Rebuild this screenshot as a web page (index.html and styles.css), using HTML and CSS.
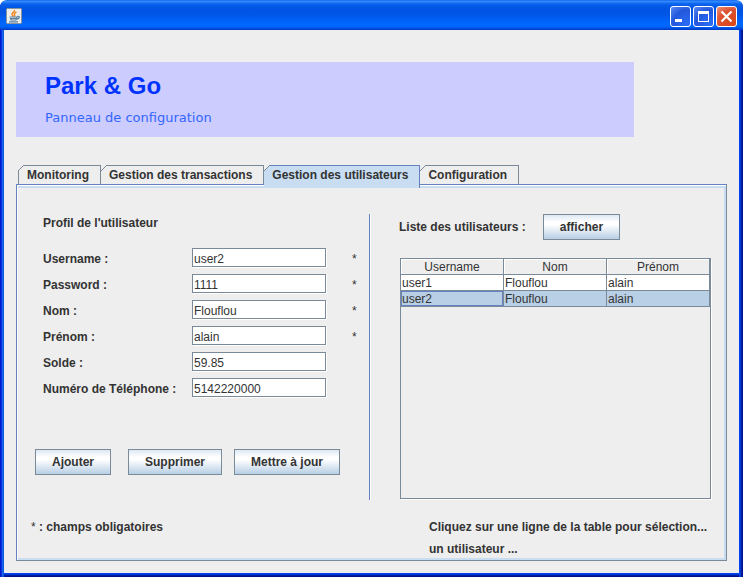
FILE: index.html
```html
<!DOCTYPE html>
<html lang="fr">
<head>
<meta charset="utf-8">
<title>Park &amp; Go</title>
<link rel="stylesheet" href="styles.css">
</head>
<body>
<div class="window">
  <header class="titlebar">
    <svg class="app-icon" viewBox="0 0 16 16" aria-hidden="true">
      <rect x="0.5" y="0.5" width="15" height="15" rx="1" fill="#eceeee" stroke="#8a949c"/>
      <path d="M8.500 2C9 4 6 4.500 6 6.200C6 7.300 7 7.500 7.300 8.500M10.500 4C8.800 4.800 8 5.500 8.500 6.500C9 7.200 8.800 7.800 8.300 8.500" fill="none" stroke="#f08a24" stroke-width="1.500"/>
      <path d="M3.500 9H11L10 12H5L4.500 10.500H11M11.500 8.500C14 8 14 10.500 11 11.200M3 13.800H12" fill="none" stroke="#5b7f9f" stroke-width="1.200"/>
    </svg>
    <div class="window-buttons">
      <button class="win-btn" type="button" aria-label="Réduire">
        <svg viewBox="0 0 19 19"><rect x="4" y="12" width="7" height="3" fill="#fff"/></svg>
      </button>
      <button class="win-btn" type="button" aria-label="Agrandir">
        <svg viewBox="0 0 19 19"><path fill="#fff" fill-rule="evenodd" d="M4 4H15V15H4ZM5 7V14H14V7Z"/></svg>
      </button>
      <button class="win-btn win-close" type="button" aria-label="Fermer">
        <svg viewBox="0 0 19 19"><path d="M4.500 4.500L14.500 14.500M14.500 4.500L4.500 14.500" stroke="#fff" stroke-width="2.200"/></svg>
      </button>
    </div>
  </header>

  <main class="content">
    <div class="banner">
      <h1>Park &amp; Go</h1>
      <p>Panneau de configuration</p>
    </div>

    <div class="tabs" role="tablist">
      <button class="tab" type="button" role="tab">Monitoring</button>
      <button class="tab" type="button" role="tab">Gestion des transactions</button>
      <button class="tab selected" type="button" role="tab" aria-selected="true">Gestion des utilisateurs</button>
      <button class="tab" type="button" role="tab">Configuration</button>
    </div>

    <section class="panel">
      <div class="columns">
        <form class="profile">
          <h2>Profil de l'utilisateur</h2>
          <div class="fields">
            <div class="field"><label for="username">Username :</label><input id="username" type="text" value="user2"><span class="star">*</span></div>
            <div class="field"><label for="password">Password :</label><input id="password" type="text" value="1111"><span class="star">*</span></div>
            <div class="field"><label for="nom">Nom :</label><input id="nom" type="text" value="Flouflou"><span class="star">*</span></div>
            <div class="field"><label for="prenom">Prénom :</label><input id="prenom" type="text" value="alain"><span class="star">*</span></div>
            <div class="field"><label for="solde">Solde :</label><input id="solde" type="text" value="59.85"></div>
            <div class="field"><label for="tel">Numéro de Téléphone :</label><input id="tel" type="text" value="5142220000"></div>
          </div>
          <div class="actions">
            <button class="btn" type="button">Ajouter</button>
            <div class="edit-actions">
              <button class="btn" type="button">Supprimer</button>
              <button class="btn" type="button">Mettre à jour</button>
            </div>
          </div>
        </form>

        <div class="users">
          <div class="users-head">
            <h2>Liste des utilisateurs :</h2>
            <button class="btn" type="button">afficher</button>
          </div>
          <div class="table-box">
            <table>
              <thead><tr><th>Username</th><th>Nom</th><th>Prénom</th></tr></thead>
              <tbody>
                <tr><td>user1</td><td>Flouflou</td><td>alain</td></tr>
                <tr class="row-selected"><td class="focused">user2</td><td>Flouflou</td><td>alain</td></tr>
              </tbody>
            </table>
          </div>
        </div>
      </div>

      <div class="notes">
        <p class="note-required"><span class="star">*</span> : champs obligatoires</p>
        <div class="note-help">
          <p>Cliquez sur une ligne de la table pour sélection...</p>
          <p>un utilisateur ...</p>
        </div>
      </div>
    </section>
  </main>
</div>
</body>
</html>
```

FILE: styles.css
```css
:root {
  --face: #eeeeee;
  --line: #7a8a99;
  --accent: #6382bf;
  --light: #c8ddf2;
  --text: #333333;
}

* { box-sizing: border-box; }

body {
  margin: 0;
  background: #fff;
  color: var(--text);
  font: bold 12px/14px "Liberation Sans", Arial, sans-serif;
}

h1, h2, p { margin: 0; }
h2 { font-size: 12px; line-height: 14px; }
button, input { font: inherit; color: inherit; }

/* Window frame */
.window {
  display: flex;
  flex-direction: column;
  min-height: 100vh;
  padding: 0 4px 4px;
  border-radius: 7px 7px 0 0;
  overflow: hidden;
  background:
    linear-gradient(90deg, #0019cf 1px, #0831d9 1px 2px, #166aee 2px 3px, #0855dd 3px) left / 4px 100% no-repeat,
    linear-gradient(90deg, #0241eb 1px, #0038d8 1px 2px, #001da0 2px 3px, #00138c 3px) right / 4px 100% no-repeat,
    linear-gradient(#0241eb 1px, #0038d8 1px 2px, #001da0 2px 3px, #00138c 3px) bottom / 100% 4px no-repeat;
}

.titlebar {
  display: flex;
  justify-content: space-between;
  align-items: flex-start;
  height: 30px;
  margin: 0 -4px;
  padding: 6px 6px 0;
  background: linear-gradient(#0058e6 0, #3a8eff 1px, #2a83f7 2px, #0a62ee 4px, #0054e3 8px, #0055e5 14px, #0060f6 20px, #0069ff 25px, #0061f5 27px, #0046d4 29px, #0038c0 30px);
}

.app-icon { width: 16px; height: 16px; margin-top: 2px; }
.window-buttons { display: flex; gap: 2px; }

.win-btn {
  width: 21px;
  height: 21px;
  padding: 0;
  border: 1px solid #fff;
  border-radius: 3px;
  background: radial-gradient(circle at 85% 90%, #2a6cf5, #2458dc 60%, #5c8cf4 100%);
}
.win-btn svg { display: block; width: 19px; height: 19px; }
.win-close { background: radial-gradient(circle at 85% 90%, #dc4818, #dc5030 60%, #f09478 100%); }

/* Page */
.content {
  display: flex;
  flex: 1;
  flex-direction: column;
  padding: 32px 12px 12px;
  background: var(--face);
}

.banner {
  height: 75px;
  margin-right: 93px;
  padding: 9px 29px 0;
  background: #ccccff;
}
.banner h1 { color: #0033ff; font-size: 24px; line-height: 30px; }
.banner p {
  margin-top: 8px;
  color: #3366ff;
  font: 13px/18px "DejaVu Sans", Verdana, sans-serif;
}

/* Tabs */
.tabs {
  display: flex;
  margin-top: 28px;
  padding-left: 2px;
}
.tab {
  position: relative;
  height: 19px;
  padding: 0 11px 0 8px;
  border: 1px solid var(--line);
  border-width: 1px 1px 0 0;
  background: var(--face);
  line-height: 18px;
}
.tab:first-child { border-left-width: 1px; }
.tab::before {
  content: "";
  position: absolute;
  top: -1px;
  left: 0;
  width: 6px;
  height: 6px;
  background: linear-gradient(135deg, var(--face) 0 45%, var(--line) 45% 56%, transparent 56%);
}
.tab:first-child::before { left: -1px; }
.tab.selected {
  height: 23px;
  margin-bottom: -4px;
  padding-bottom: 4px;
  border-color: var(--accent);
  background: var(--light);
}

.panel {
  display: flex;
  flex: 1;
  flex-direction: column;
  padding: 29px 0 2px 1px;
  border: 1px solid var(--line);
  border-top-color: var(--accent);
  border-left-color: var(--accent);
  box-shadow: inset 1px 1px #fff, inset 0 3px var(--light), inset -2px -2px var(--light);
}

.columns {
  display: grid;
  flex: 1;
  grid-template-columns: 352fr 356fr;
}

/* Profile form */
.profile {
  display: flex;
  flex-direction: column;
  padding: 2px 0 25px 25px;
  border-right: 1px solid var(--accent);
  box-shadow: 1px 0 #fff;
}
.fields {
  display: grid;
  gap: 7px;
  margin-top: 18px;
}
.field {
  display: grid;
  grid-template-columns: 149px 134px 1fr;
  align-items: center;
  height: 19px;
}
.field label { padding-top: 3px; }
.field input {
  width: 100%;
  height: 19px;
  padding: 2px 1px 0;
  border: 1px solid var(--line);
  background: #fff;
  box-shadow: 1px 1px #fff;
  font-weight: normal;
}
.star { font-weight: normal; }
.field .star { padding: 2px 0 0 26px; }

.actions {
  display: flex;
  gap: 17px;
  margin: auto 0 0 -8px;
}
.edit-actions { display: flex; gap: 12px; }

.btn {
  height: 26px;
  padding: 0 16px;
  border: 1px solid var(--line);
  background: linear-gradient(#dde8f3, #fff 30%, #fff 40%, #b8cfe5);
  white-space: nowrap;
}

/* User list */
.users {
  display: flex;
  flex-direction: column;
  padding: 0 15px 1px 29px;
}
.users-head {
  display: flex;
  align-items: center;
  gap: 17px;
}
.table-box {
  flex: 1;
  margin: 18px 0 0 1px;
  border: 1px solid var(--line);
  box-shadow: 1px 1px #fff;
}
table {
  width: 100%;
  border-collapse: separate;
  border-spacing: 0;
  table-layout: fixed;
  font-weight: normal;
}
th, td {
  height: 16px;
  padding: 1px 1px 0;
  border: 1px solid var(--line);
  border-width: 0 1px 1px 0;
  line-height: 14px;
}
th {
  box-shadow: inset 1px 1px #fff;
  font-weight: normal;
}
td { background: #fff; }
.row-selected td { background: #b8cfe5; }
.row-selected .focused { box-shadow: inset 0 0 0 1px var(--accent); }

/* Notes */
.notes {
  display: grid;
  grid-template-columns: 352fr 356fr;
  margin-top: 20px;
}
.note-required { padding-left: 13px; }
.note-help {
  display: grid;
  gap: 8px;
  padding: 0 0 2px 59px;
}
```
